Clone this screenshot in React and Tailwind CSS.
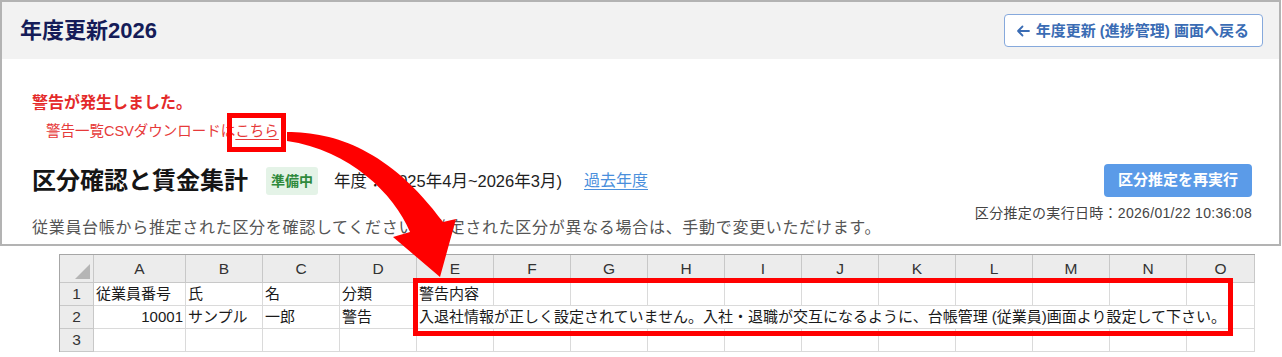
import React from "react";

const COLS = ["A", "B", "C", "D", "E", "F", "G", "H", "I", "J", "K", "L", "M", "N", "O"];

function Cell({ children, className = "" }) {
  return (
    <div
      className={
        "border-r border-b border-[#dadada] text-[15px] leading-[22px] text-[#1a1a1a] px-[2px] whitespace-nowrap " +
        className
      }
    >
      {children}
    </div>
  );
}

function HeadCell({ children }) {
  return (
    <div className="border-r border-b border-[#c8c8c8] bg-[#ececec] flex items-center justify-center text-[15.5px] text-[#333]">
      {children}
    </div>
  );
}

function RowNum({ n }) {
  return (
    <div className="border-r border-b border-[#c8c8c8] bg-[#ececec] flex items-center justify-center text-[15.5px] text-[#333]">
      {n}
    </div>
  );
}

function Sheet() {
  const row1 = ["従業員番号", "氏", "名", "分類", "警告内容"];
  return (
    <div className="relative ml-[59px] mt-[8px] w-fit border-l border-t border-[#a6a6a6]">
      <div className="grid grid-cols-[34px_92px_repeat(13,77px)_68px] grid-rows-[28px_23px_23px_23px]">
        <div className="border-r border-b border-[#c8c8c8] bg-[#ececec] relative">
          <svg className="absolute right-[3px] bottom-[3px]" width="15" height="15" viewBox="0 0 15 15">
            <polygon points="15,0 15,15 0,15" fill="#b5b5b5" />
          </svg>
        </div>
        {COLS.map((c) => (
          <HeadCell key={c}>{c}</HeadCell>
        ))}

        <RowNum n="1" />
        {COLS.map((c, i) => (
          <Cell key={c}>{row1[i] || ""}</Cell>
        ))}

        <RowNum n="2" />
        <Cell className="text-right">10001</Cell>
        <Cell>サンプル</Cell>
        <Cell>一郎</Cell>
        <Cell>警告</Cell>
        <Cell className="col-span-11">
          入退社情報が正しく設定されていません。入社・退職が交互になるように、台帳管理 (従業員)画面より設定して下さい。
        </Cell>

        <RowNum n="3" />
        {COLS.map((c) => (
          <Cell key={c}></Cell>
        ))}
      </div>
      <div className="absolute left-[353px] top-[23px] w-[820px] h-[58px] border-[5px] border-[#ff0000] pointer-events-none" />
    </div>
  );
}

export default function App() {
  return (
    <div
      className="relative w-[1282px] h-[357px] bg-white overflow-hidden"
      style={{ fontFamily: '"Liberation Sans", "Noto Sans CJK JP", sans-serif' }}
    >
      {/* Top panel */}
      <div className="w-[1281px] h-[246px] border-2 border-[#b3b3b3]">
        <div className="h-[57px] bg-[#f2f2f2] flex items-center justify-between pl-[18px] pr-[16px]">
          <h1 className="text-[22px] font-bold text-[#151c58] leading-none">年度更新2026</h1>
          <button className="h-[33px] pl-[11px] pr-[13px] flex items-center rounded-[4px] border border-[#86a9dc] bg-white text-[15px] font-bold text-[#3a6cb4] leading-none">
            <svg width="14" height="14" viewBox="0 0 14 14" className="mr-[6px]">
              <path d="M13 7 H2 M6.5 2.5 L2 7 L6.5 11.5" fill="none" stroke="#3a6cb4" strokeWidth="1.8" strokeLinecap="round" strokeLinejoin="round" />
            </svg>
            年度更新 (進捗管理) 画面へ戻る
          </button>
        </div>

        <div className="pl-[30px] pr-[27px] pt-[34px]">
          <div className="text-[16px] font-bold leading-[20px] text-[#e42a2a]">警告が発生しました。</div>
          <div className="mt-[8px] pl-[14px] text-[14.5px] leading-[20px] text-[#e63a3a]">
            警告一覧CSVダウンロードは
            <span className="relative underline underline-offset-[3px]">
              こちら
              <span className="absolute left-[-8px] right-[-7px] top-[-10px] bottom-[-13px] border-[5px] border-[#ff0000]" />
            </span>
          </div>

          <div className="mt-[23px] flex justify-between items-start">
            <div>
              <div className="h-[34px] flex items-center">
                <h2 className="text-[24px] font-bold text-[#151515] leading-none">区分確認と賃金集計</h2>
                <span className="ml-[18px] h-[28px] px-[5px] flex items-center rounded-[3px] bg-[#e4f3e7] text-[14px] font-bold text-[#2f8a3c]">
                  準備中
                </span>
                <span className="ml-[16px] inline-block w-[250px] text-[16.5px] text-[#1e1e1e]">年度：(2025年4月~2026年3月)</span>
                <a className="text-[16px] text-[#4a8fdc] underline underline-offset-[3px]">過去年度</a>
              </div>
              <p className="mt-[20px] text-[16px] leading-[20px] tracking-[0.7px] text-[#555]">
                従業員台帳から推定された区分を確認してください。推定された区分が異なる場合は、手動で変更いただけます。
              </p>
            </div>
            <div className="flex flex-col items-end">
              <button className="h-[33px] w-[148px] rounded-[4px] bg-[#5b9be8] text-white text-[15px] font-bold">
                区分推定を再実行
              </button>
              <div className="mt-[8px] text-[14px] leading-[16px] tracking-[0.3px] text-[#444]">
                区分推定の実行日時：2026/01/22 10:36:08
              </div>
            </div>
          </div>
        </div>
      </div>

      <Sheet />

      {/* Annotation arrow */}
      <svg
        className="absolute top-0 left-0 pointer-events-none"
        width="1282"
        height="357"
        viewBox="0 0 1282 357"
      >
        <path
          d="M 287 132 C 335 132, 390 150, 443 222 L 456 219 L 440 277 L 393 237 L 410 232 C 394 194, 350 150, 287 141 Z"
          fill="#ff0000"
        />
      </svg>
    </div>
  );
}
